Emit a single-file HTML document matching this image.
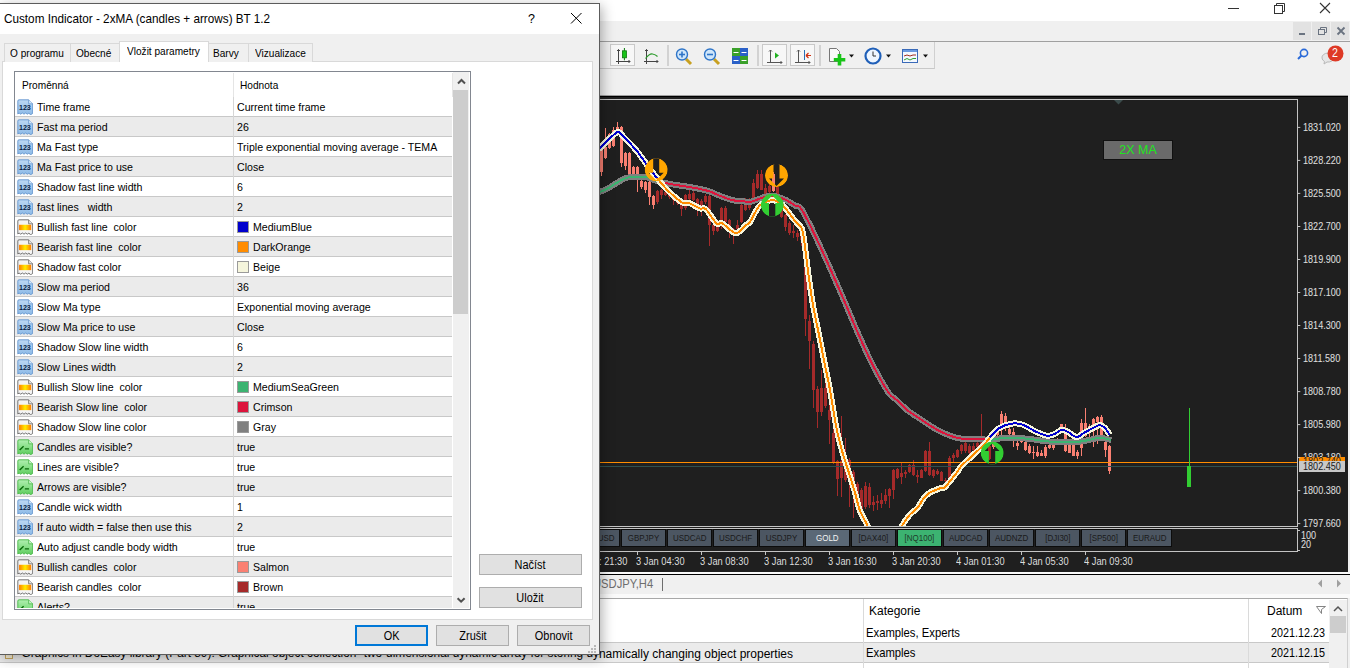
<!DOCTYPE html><html><head><meta charset="utf-8"><style>
*{margin:0;padding:0;box-sizing:border-box}
html,body{width:1350px;height:668px;overflow:hidden;background:#f0f0f0;font-family:"Liberation Sans",sans-serif}
body{position:relative}
.a{position:absolute}
.t{position:absolute;white-space:pre;line-height:1}
.px{position:absolute;white-space:pre;line-height:1;font-size:10.1px;color:#e0e0e0;left:1303.3px;transform:scaleX(0.9);transform-origin:0 0}
.tm{position:absolute;white-space:pre;line-height:1;font-size:10.6px;color:#dcdcdc;top:555.7px;transform:scaleX(0.877);transform-origin:0 0}
.sym{position:absolute;top:529px;height:18px;background:#4c5662;border:1px solid #0c0c0c;font-size:9.4px;color:#1a1a1a;text-align:center;line-height:15.6px;white-space:pre}.sym span{display:inline-block;transform:scaleX(0.85)}
.tab{position:absolute;top:40px;height:21px;background:#f0f0f0;border:1px solid #d9d9d9;border-bottom:none;font-size:10.1px;color:#000;white-space:pre}
.row{position:absolute;left:1px;width:438px;height:20px;font-size:10.6px;color:#000;white-space:pre}
.row .n{position:absolute;left:22px;top:4.8px;line-height:1;font-size:11.8px;transform:scaleX(0.898);transform-origin:0 0}
.row .v{position:absolute;left:222px;top:4.8px;line-height:1;font-size:11.8px;transform:scaleX(0.898);transform-origin:0 0}
.row .ic{position:absolute;left:1.6px;top:1.8px;width:16.5px;height:16.5px}
.row .sw{position:absolute;left:222px;top:4px;width:12px;height:12px;border:1px solid #9a9a9a}
.row .vs{position:absolute;left:238px;top:4.8px;line-height:1;font-size:11.8px;transform:scaleX(0.898);transform-origin:0 0}
.btn{position:absolute;background:#e1e1e1;border:1px solid #adadad;font-size:10.6px;color:#000;text-align:center;white-space:pre}
</style></head><body>
<div class="a" style="left:0;top:0;width:1350px;height:21px;background:#fff"></div>
<svg class="a" style="left:1220px;top:0" width="130" height="21"><line x1="8" y1="8.5" x2="19" y2="8.5" stroke="#333" stroke-width="1"/><rect x="54.5" y="5.5" width="8" height="8" fill="none" stroke="#333"/><path d="M56.5 5.5V3.5h8v8h-2" fill="none" stroke="#333"/><path d="M100 3l10 10M110 3l-10 10" stroke="#333" stroke-width="1.1"/></svg>
<div class="a" style="left:1293px;top:22px;width:18px;height:18px;background:#e2e2e2"></div>
<div class="a" style="left:1312px;top:22px;width:18px;height:18px;background:#e2e2e2"></div>
<div class="a" style="left:1331px;top:22px;width:18px;height:18px;background:#e2e2e2"></div>
<svg class="a" style="left:1293px;top:22px" width="57" height="18"><rect x="6" y="11" width="6" height="2" fill="#6a7380"/><rect x="25.5" y="7.5" width="6" height="5" fill="none" stroke="#6a7380"/><path d="M27.5 7.5V5.5h6v5h-2" fill="none" stroke="#6a7380"/><path d="M44.5 5.5l7 7M51.5 5.5l-7 7" stroke="#6a7380" stroke-width="1.8"/></svg>
<div class="a" style="left:0;top:41px;width:1350px;height:1px;background:#a0a0a0"></div>
<div class="a" style="left:0;top:42px;width:935px;height:27px;border-bottom:1px solid #c8c8c8;border-right:1px solid #d0d0d0"></div>
<div class="a" style="left:0;top:95px;width:1348px;height:1px;background:#a0a0a0"></div>
<div class="a" style="left:0;top:96px;width:1348px;height:1px;background:#000"></div>
<div class="a" style="left:0;top:97px;width:1348px;height:475px;background:#1f1f1f"></div>
<div class="a" style="left:0;top:572px;width:1350px;height:2px;background:#fafafa"></div>
<div class="a" style="left:0;top:574px;width:1350px;height:1px;background:#000"></div>
<div class="px" style="top:122.5px">1831.020</div>
<div class="px" style="top:155.5px">1828.220</div>
<div class="px" style="top:188.5px">1825.500</div>
<div class="px" style="top:221.6px">1822.700</div>
<div class="px" style="top:254.6px">1819.900</div>
<div class="px" style="top:287.6px">1817.100</div>
<div class="px" style="top:320.6px">1814.300</div>
<div class="px" style="top:353.6px">1811.580</div>
<div class="px" style="top:386.7px">1808.780</div>
<div class="px" style="top:419.7px">1805.980</div>
<div class="px" style="top:452.7px">1803.180</div>
<div class="px" style="top:485.7px">1800.380</div>
<div class="px" style="top:518.7px">1797.660</div>
<div class="a" style="left:1299px;top:457px;width:46px;height:5px;background:#ff8c00;overflow:hidden"><div class="t" style="left:4px;top:0px;font-size:10.4px;color:#222;transform:scaleX(0.875);transform-origin:0 0">1802.740</div></div>
<div class="a" style="left:1299px;top:461px;width:46px;height:11px;background:#c8c8c8"></div>
<div class="t" style="left:1303.3px;top:462.1px;font-size:10.1px;color:#1a1a1a;transform:scaleX(0.9);transform-origin:0 0">1802.450</div>
<div class="px" style="top:531px;left:1301px">100</div>
<div class="px" style="top:540.3px;left:1301px">20</div>
<div class="tm" style="left:598.7px">: 21:30</div>
<div class="tm" style="left:636.0px">3 Jan 04:30</div>
<div class="tm" style="left:700.0px">3 Jan 08:30</div>
<div class="tm" style="left:764.0px">3 Jan 12:30</div>
<div class="tm" style="left:828.0px">3 Jan 16:30</div>
<div class="tm" style="left:892.0px">3 Jan 20:30</div>
<div class="tm" style="left:956.0px">4 Jan 01:30</div>
<div class="tm" style="left:1020.0px">4 Jan 05:30</div>
<div class="tm" style="left:1084.0px">4 Jan 09:30</div>
<div class="sym" style="left:575px;width:45px;"><span>AUDUSD</span></div>
<div class="sym" style="left:621px;width:45px;"><span>GBPJPY</span></div>
<div class="sym" style="left:667px;width:45px;"><span>USDCAD</span></div>
<div class="sym" style="left:713px;width:45px;"><span>USDCHF</span></div>
<div class="sym" style="left:759px;width:45px;"><span>USDJPY</span></div>
<div class="sym" style="left:805px;width:45px;background:#5a6876;color:#f4f4f4;"><span>GOLD</span></div>
<div class="sym" style="left:851px;width:45px;"><span>[DAX40]</span></div>
<div class="sym" style="left:897px;width:45px;background:#3cb371;color:#1e3a2a;"><span>[NQ100]</span></div>
<div class="sym" style="left:943px;width:45px;"><span>AUDCAD</span></div>
<div class="sym" style="left:989px;width:45px;"><span>AUDNZD</span></div>
<div class="sym" style="left:1035px;width:45px;"><span>[DJI30]</span></div>
<div class="sym" style="left:1081px;width:45px;"><span>[SP500]</span></div>
<div class="sym" style="left:1127px;width:45px;"><span>EURAUD</span></div>
<div class="a" style="left:1103px;top:140px;width:70px;height:20px;background:#6a6a6a;border:1px solid #111;color:#1ee61e;font-size:12.5px;text-align:center;line-height:18px">2X MA</div>
<svg class="a" style="left:0;top:0" width="1350" height="668"><defs><clipPath id="plot"><rect x="0" y="100" width="1297" height="426"/></clipPath><clipPath id="acirc"><circle cx="0" cy="0" r="11.5"/></clipPath></defs><rect x="-5" y="99.5" width="1302.5" height="427" fill="none" stroke="#c4c4c4" stroke-width="1"/><rect x="-5" y="528.5" width="1302.5" height="23" fill="none" stroke="#c4c4c4" stroke-width="1"/><path d="M1114 100h9l-4.5 4.5z" fill="#3b4b4b"/><line x1="1297.5" y1="127.4" x2="1300.3" y2="127.4" stroke="#c4c4c4"/><line x1="1297.5" y1="160.4" x2="1300.3" y2="160.4" stroke="#c4c4c4"/><line x1="1297.5" y1="193.4" x2="1300.3" y2="193.4" stroke="#c4c4c4"/><line x1="1297.5" y1="226.5" x2="1300.3" y2="226.5" stroke="#c4c4c4"/><line x1="1297.5" y1="259.5" x2="1300.3" y2="259.5" stroke="#c4c4c4"/><line x1="1297.5" y1="292.5" x2="1300.3" y2="292.5" stroke="#c4c4c4"/><line x1="1297.5" y1="325.5" x2="1300.3" y2="325.5" stroke="#c4c4c4"/><line x1="1297.5" y1="358.5" x2="1300.3" y2="358.5" stroke="#c4c4c4"/><line x1="1297.5" y1="391.6" x2="1300.3" y2="391.6" stroke="#c4c4c4"/><line x1="1297.5" y1="424.6" x2="1300.3" y2="424.6" stroke="#c4c4c4"/><line x1="1297.5" y1="457.6" x2="1300.3" y2="457.6" stroke="#c4c4c4"/><line x1="1297.5" y1="490.6" x2="1300.3" y2="490.6" stroke="#c4c4c4"/><line x1="1297.5" y1="523.6" x2="1300.3" y2="523.6" stroke="#c4c4c4"/><path d="M1297.5 530.5h2.5M1297.5 550.5h2.5" stroke="#c4c4c4"/><line x1="573.5" y1="551.5" x2="573.5" y2="555" stroke="#c4c4c4"/><line x1="637.5" y1="551.5" x2="637.5" y2="555" stroke="#c4c4c4"/><line x1="701.5" y1="551.5" x2="701.5" y2="555" stroke="#c4c4c4"/><line x1="765.5" y1="551.5" x2="765.5" y2="555" stroke="#c4c4c4"/><line x1="829.5" y1="551.5" x2="829.5" y2="555" stroke="#c4c4c4"/><line x1="893.5" y1="551.5" x2="893.5" y2="555" stroke="#c4c4c4"/><line x1="957.5" y1="551.5" x2="957.5" y2="555" stroke="#c4c4c4"/><line x1="1021.5" y1="551.5" x2="1021.5" y2="555" stroke="#c4c4c4"/><line x1="1085.5" y1="551.5" x2="1085.5" y2="555" stroke="#c4c4c4"/><path d="M600 149h3v23h-3zM601 147h1v29h-1zM604 147h3v11h-3zM605 128h1v31h-1zM608 134h3v14h-3zM609 133h1v16h-1zM612 130h3v16h-3zM613 127h1v20h-1zM616 127h3v3h-3zM617 122h1v9h-1zM620 127h3v36h-3zM621 126h1v41h-1zM624 153h3v13h-3zM625 152h1v18h-1zM628 153h3v22h-3zM629 152h1v24h-1zM632 167h3v8h-3zM633 166h1v10h-1zM636 167h3v8h-3zM637 166h1v26h-1zM640 181h3v6h-3zM641 180h1v9h-1zM644 182h3v8h-3zM645 181h1v12h-1zM648 182h3v15h-3zM649 181h1v24h-1zM652 196h3v9h-3zM653 195h1v14h-1zM772 174h3v17h-3zM773 172h1v20h-1zM992 444h3v3h-3zM993 442h1v7h-1zM996 428h3v7h-3zM997 426h1v10h-1zM1000 414h3v10h-3zM1001 411h1v25h-1zM1004 416h3v6h-3zM1005 413h1v18h-1zM1008 429h3v5h-3zM1009 427h1v9h-1zM1012 432h3v3h-3zM1013 428h1v19h-1zM1016 443h3v3h-3zM1017 441h1v9h-1zM1020 441h3v1h-3zM1021 439h1v4h-1zM1024 442h3v8h-3zM1025 441h1v10h-1zM1028 446h3v7h-3zM1029 444h1v10h-1zM1032 452h3v1h-3zM1033 446h1v13h-1zM1036 452h3v4h-3zM1037 446h1v11h-1zM1040 453h3v3h-3zM1041 450h1v6h-1zM1044 447h3v9h-3zM1045 445h1v13h-1zM1048 445h3v3h-3zM1049 444h1v5h-1zM1052 444h3v4h-3zM1053 443h1v7h-1zM1056 440h3v3h-3zM1057 438h1v7h-1zM1060 424h3v7h-3zM1061 424h1v8h-1zM1064 428h3v23h-3zM1065 424h1v28h-1zM1068 444h3v9h-3zM1069 442h1v11h-1zM1072 444h3v12h-3zM1073 443h1v13h-1zM1076 452h3v4h-3zM1077 450h1v9h-1zM1080 423h3v25h-3zM1081 419h1v37h-1zM1084 423h3v13h-3zM1085 408h1v29h-1zM1088 426h3v4h-3zM1089 424h1v14h-1zM1092 419h3v12h-3zM1093 418h1v29h-1zM1096 417h3v5h-3zM1097 416h1v28h-1zM1100 417h3v19h-3zM1101 415h1v22h-1zM1104 442h3v8h-3zM1105 441h1v16h-1zM1108 446h3v25h-3zM1109 445h1v29h-1z" fill="#fa8072" clip-path="url(#plot)"/><path d="M656 191h3v11h-3zM657 190h1v14h-1zM660 190h3v5h-3zM661 189h1v10h-1zM664 192h3v3h-3zM665 191h1v5h-1zM668 193h3v4h-3zM669 192h1v7h-1zM672 198h3v2h-3zM673 196h1v9h-1zM676 200h3v3h-3zM677 198h1v7h-1zM680 205h3v4h-3zM681 204h1v12h-1zM684 195h3v13h-3zM685 194h1v16h-1zM688 194h3v5h-3zM689 190h1v10h-1zM692 193h3v7h-3zM693 190h1v11h-1zM696 199h3v6h-3zM697 198h1v18h-1zM700 201h3v5h-3zM701 199h1v17h-1zM704 196h3v6h-3zM705 194h1v10h-1zM708 196h3v29h-3zM709 195h1v51h-1zM712 225h3v6h-3zM713 224h1v11h-1zM716 226h3v5h-3zM717 225h1v7h-1zM720 208h3v17h-3zM721 207h1v22h-1zM724 208h3v14h-3zM725 206h1v17h-1zM728 220h3v8h-3zM729 219h1v19h-1zM732 229h3v2h-3zM733 228h1v16h-1zM736 225h3v4h-3zM737 220h1v10h-1zM740 205h3v17h-3zM741 201h1v22h-1zM744 205h3v5h-3zM745 198h1v13h-1zM748 204h3v4h-3zM749 198h1v12h-1zM752 183h3v15h-3zM753 179h1v20h-1zM756 174h3v14h-3zM757 170h1v19h-1zM760 174h3v16h-3zM761 170h1v20h-1zM764 188h3v6h-3zM765 184h1v11h-1zM768 186h3v6h-3zM769 184h1v9h-1zM776 187h3v8h-3zM777 186h1v10h-1zM780 210h3v7h-3zM781 208h1v10h-1zM784 215h3v12h-3zM785 214h1v17h-1zM788 223h3v10h-3zM789 221h1v14h-1zM792 231h3v2h-3zM793 225h1v13h-1zM796 233h3v4h-3zM797 230h1v11h-1zM800 236h3v4h-3zM801 232h1v14h-1zM804 262h3v57h-3zM805 240h1v96h-1zM808 321h3v20h-3zM809 315h1v54h-1zM812 344h3v46h-3zM813 341h1v67h-1zM816 389h3v23h-3zM817 386h1v42h-1zM820 388h3v24h-3zM821 370h1v46h-1zM824 388h3v18h-3zM825 370h1v38h-1zM828 410h3v10h-3zM829 399h1v45h-1zM832 433h3v29h-3zM833 417h1v47h-1zM836 461h3v18h-3zM837 460h1v36h-1zM840 461h3v17h-3zM841 416h1v81h-1zM844 458h3v22h-3zM845 438h1v44h-1zM848 460h3v9h-3zM849 458h1v49h-1zM852 472h3v10h-3zM853 470h1v48h-1zM856 484h3v15h-3zM857 482h1v18h-1zM860 490h3v19h-3zM861 488h1v23h-1zM864 486h3v21h-3zM865 482h1v27h-1zM868 487h3v18h-3zM869 483h1v25h-1zM872 502h3v3h-3zM873 496h1v15h-1zM876 501h3v2h-3zM877 495h1v15h-1zM880 500h3v4h-3zM881 493h1v15h-1zM884 495h3v6h-3zM885 489h1v15h-1zM888 489h3v7h-3zM889 488h1v20h-1zM892 470h3v20h-3zM893 469h1v30h-1zM896 469h3v9h-3zM897 468h1v11h-1zM900 473h3v4h-3zM901 463h1v21h-1zM904 472h3v2h-3zM905 470h1v8h-1zM908 465h3v7h-3zM909 464h1v9h-1zM912 465h3v10h-3zM913 460h1v16h-1zM916 475h3v2h-3zM917 470h1v13h-1zM920 470h3v8h-3zM921 469h1v9h-1zM924 451h3v20h-3zM925 450h1v22h-1zM928 451h3v24h-3zM929 442h1v34h-1zM932 470h3v6h-3zM933 469h1v9h-1zM936 471h3v3h-3zM937 469h1v6h-1zM940 472h3v9h-3zM941 471h1v10h-1zM944 480h3v1h-3zM945 478h1v5h-1zM948 458h3v22h-3zM949 456h1v25h-1zM952 455h3v3h-3zM953 453h1v10h-1zM956 450h3v7h-3zM957 449h1v9h-1zM960 445h3v6h-3zM961 444h1v10h-1zM964 443h3v8h-3zM965 442h1v11h-1zM968 446h3v7h-3zM969 444h1v10h-1zM972 446h3v4h-3zM973 443h1v8h-1zM976 443h3v4h-3zM977 442h1v6h-1zM980 440h3v7h-3zM981 414h1v34h-1zM984 444h3v3h-3zM985 442h1v6h-1zM988 446h3v13h-3zM989 444h1v16h-1z" fill="#a52a2a" clip-path="url(#plot)"/><rect x="0" y="462" width="1297" height="1" fill="#ff8c00"/><rect x="0" y="466" width="1297" height="1" fill="#2f4f4f"/><rect x="1189" y="408" width="1" height="58" fill="#32cd32"/><rect x="1187" y="466" width="4" height="21" fill="#32cd32"/><g clip-path="url(#plot)" fill="none" stroke-linejoin="round" stroke-linecap="butt" shape-rendering="crispEdges"><path d="M599.0 192.2 C600.4 191.6 603.0 191.0 607.6 188.6 C612.2 186.2 620.3 179.7 626.7 177.8 C633.1 175.9 640.8 176.5 646.0 177.1 C651.2 177.7 653.5 180.3 658.0 181.5 C662.5 182.7 667.3 183.5 673.0 184.5 C678.7 185.5 686.4 186.4 692.4 187.5 C698.4 188.6 704.6 189.9 708.9 191.2 C713.1 192.4 713.9 193.5 717.9 195.0 C721.9 196.5 727.9 199.1 732.9 200.2 C737.9 201.3 744.6 201.5 747.8 201.7 C751.0 201.9 748.3 202.5 752.0 201.5 C755.7 200.5 764.7 196.1 770.0 195.7 C775.3 195.3 779.4 197.3 783.7 199.0 C788.0 200.7 793.1 204.4 796.0 206.0 C798.9 207.6 798.4 204.7 801.0 208.5 C803.6 212.3 807.3 219.6 811.9 229.0 C816.5 238.4 823.3 253.2 828.6 265.0 C833.9 276.8 839.1 289.0 843.9 300.0 C848.6 311.0 852.5 320.7 857.1 331.1 C861.7 341.5 866.2 352.1 871.4 362.3 C876.6 372.5 884.0 385.9 888.2 392.2 C892.4 398.5 893.4 397.0 896.6 400.0 C899.8 403.0 903.4 407.0 907.4 410.2 C911.4 413.4 915.4 415.8 920.6 419.2 C925.8 422.6 932.1 427.3 938.5 430.5 C944.9 433.7 952.0 436.9 958.9 438.3 C965.8 439.7 974.8 438.5 980.0 438.8 C985.2 439.1 985.9 440.2 990.0 440.1 C994.1 440.0 998.7 438.1 1004.9 437.9 C1011.1 437.7 1019.9 438.1 1027.4 438.7 C1034.9 439.3 1041.1 441.1 1049.8 441.6 C1058.5 442.1 1071.6 442.2 1079.8 441.6 C1088.0 441.0 1094.0 438.1 1099.2 437.9 C1104.4 437.6 1109.2 439.7 1111.2 440.1" stroke="#808080" stroke-width="6"/><path d="M599.0 192.2 C600.4 191.6 603.0 191.0 607.6 188.6 C612.2 186.2 620.3 179.7 626.7 177.8 C633.1 175.9 641.0 176.5 646.0 177.1 C651.0 177.7 655.2 180.5 657.0 181.1" stroke="#3cb371" stroke-width="2"/><path d="M657.0 181.1 C657.2 181.2 655.3 180.9 658.0 181.5 C660.7 182.1 667.3 183.5 673.0 184.5 C678.7 185.5 686.4 186.4 692.4 187.5 C698.4 188.6 704.6 189.9 708.9 191.2 C713.1 192.4 713.9 193.5 717.9 195.0 C721.9 196.5 727.9 199.1 732.9 200.2 C737.9 201.3 744.6 201.5 747.8 201.7 C751.0 201.9 748.3 202.5 752.0 201.5 C755.7 200.5 764.7 196.1 770.0 195.7 C775.3 195.3 779.4 197.3 783.7 199.0 C788.0 200.7 793.1 204.4 796.0 206.0 C798.9 207.6 798.4 204.7 801.0 208.5 C803.6 212.3 807.3 219.6 811.9 229.0 C816.5 238.4 823.3 253.2 828.6 265.0 C833.9 276.8 839.1 289.0 843.9 300.0 C848.6 311.0 852.5 320.7 857.1 331.1 C861.7 341.5 866.2 352.1 871.4 362.3 C876.6 372.5 884.0 385.9 888.2 392.2 C892.4 398.5 893.4 397.0 896.6 400.0 C899.8 403.0 903.4 407.0 907.4 410.2 C911.4 413.4 915.4 415.8 920.6 419.2 C925.8 422.6 932.1 427.3 938.5 430.5 C944.9 433.7 952.0 436.9 958.9 438.3 C965.8 439.7 974.8 438.5 980.0 438.8 C985.2 439.1 988.3 439.9 990.0 440.1" stroke="#dc143c" stroke-width="2"/><path d="M990.0 440.1 C990.0 440.1 987.5 440.5 990.0 440.1 C992.5 439.7 998.7 438.1 1004.9 437.9 C1011.1 437.7 1019.9 438.1 1027.4 438.7 C1034.9 439.3 1041.1 441.1 1049.8 441.6 C1058.5 442.1 1071.6 442.2 1079.8 441.6 C1088.0 441.0 1094.0 438.1 1099.2 437.9 C1104.4 437.6 1109.2 439.7 1111.2 440.1" stroke="#3cb371" stroke-width="2"/><path d="M599.0 149.0 C601.4 146.8 613.7 133.9 617.0 132.3 C620.3 130.7 620.9 134.4 623.5 136.8 C626.1 139.2 633.3 146.7 636.3 150.3 C639.3 153.9 643.3 159.8 646.0 163.5 C648.7 167.2 653.8 174.2 656.7 177.8 C659.6 181.4 664.3 187.1 667.7 190.4 C671.1 193.7 679.1 200.7 682.0 202.4 C684.9 204.1 687.0 202.4 689.4 203.2 C691.8 204.0 697.7 207.6 699.9 208.4 C702.1 209.2 703.7 207.2 705.9 209.2 C708.1 211.2 714.2 221.5 716.4 223.4 C718.6 225.3 719.8 222.1 722.4 223.4 C725.0 224.7 732.6 233.2 735.8 233.4 C739.0 233.6 744.4 226.4 746.3 224.9 C748.2 223.4 748.3 224.5 750.0 222.0 C751.7 219.5 756.7 208.7 759.4 205.8 C762.1 202.9 768.0 201.1 770.2 200.4 C772.4 199.7 774.4 200.3 776.0 200.8 C777.6 201.3 779.9 202.0 782.3 204.5 C784.7 207.0 791.3 216.3 793.9 219.5 C796.5 222.7 800.3 225.4 801.7 228.5 C803.1 231.6 803.6 236.3 804.5 242.8 C805.4 249.3 807.7 268.7 808.8 277.0 C809.9 285.3 811.7 297.7 813.0 305.3 C814.3 312.9 817.3 326.2 818.8 333.8 C820.3 341.4 822.9 354.6 824.4 362.2 C825.9 369.8 828.5 381.7 830.1 390.6 C831.7 399.5 835.0 420.9 836.7 429.2 C838.4 437.5 840.8 446.5 842.5 452.5 C844.2 458.5 847.6 468.5 849.3 474.0 C851.0 479.5 853.8 488.5 855.2 493.4 C856.6 498.3 858.4 506.9 860.0 511.0 C861.6 515.1 864.9 520.0 866.9 524.5 C868.9 529.0 872.7 541.3 875.0 545.0 C877.3 548.7 881.6 552.0 884.0 552.0 C886.4 552.0 890.6 548.5 893.0 545.0 C895.4 541.5 899.8 530.0 902.0 526.0 C904.2 522.0 907.5 517.3 909.6 514.9 C911.7 512.5 915.8 510.0 917.7 507.7 C919.6 505.4 922.3 499.8 924.0 497.8 C925.7 495.8 928.0 493.7 930.3 492.4 C932.6 491.1 939.1 488.7 941.0 488.0 C942.9 487.3 943.2 488.7 944.6 487.5 C946.0 486.3 950.0 481.2 951.8 479.0 C953.6 476.8 956.6 472.7 958.0 470.9 C959.4 469.1 959.7 467.6 962.0 465.3 C964.3 463.0 972.0 456.1 975.0 453.3 C978.0 450.5 982.5 446.3 984.6 444.1 C986.7 441.9 988.9 438.6 990.8 436.5 C992.7 434.4 996.1 429.9 998.9 428.2 C1001.7 426.5 1008.4 424.2 1011.6 423.7 C1014.8 423.2 1019.8 423.7 1022.9 424.7 C1026.0 425.7 1031.7 429.7 1034.9 431.2 C1038.1 432.7 1044.2 435.3 1046.8 435.7 C1049.4 436.1 1052.3 435.0 1054.3 434.2 C1056.3 433.4 1060.0 430.0 1061.8 429.7 C1063.6 429.4 1065.8 430.9 1067.8 431.9 C1069.8 432.9 1074.6 437.1 1076.8 437.2 C1079.0 437.3 1081.3 434.3 1084.3 432.7 C1087.3 431.1 1096.4 425.8 1099.2 425.2 C1102.0 424.6 1103.8 426.9 1105.2 428.2 C1106.6 429.5 1109.1 434.0 1109.7 434.9" stroke="#f5f5dc" stroke-width="6"/><path d="M599.0 149.0 C601.4 146.8 613.7 133.9 617.0 132.3 C620.3 130.7 620.9 134.4 623.5 136.8 C626.1 139.2 633.3 146.7 636.3 150.3 C639.3 153.9 643.3 159.8 646.0 163.5 C648.7 167.2 655.2 175.8 656.7 177.8 C658.2 179.8 657.0 178.1 657.0 178.1" stroke="#0000cd" stroke-width="2"/><path d="M657.0 178.1 C658.4 179.8 664.4 187.2 667.7 190.4 C671.0 193.6 679.1 200.7 682.0 202.4 C684.9 204.1 687.0 202.4 689.4 203.2 C691.8 204.0 697.7 207.6 699.9 208.4 C702.1 209.2 703.7 207.2 705.9 209.2 C708.1 211.2 714.2 221.5 716.4 223.4 C718.6 225.3 719.8 222.1 722.4 223.4 C725.0 224.7 732.6 233.2 735.8 233.4 C739.0 233.6 744.4 226.4 746.3 224.9 C748.2 223.4 748.3 224.5 750.0 222.0 C751.7 219.5 756.7 208.7 759.4 205.8 C762.1 202.9 768.0 201.1 770.2 200.4 C772.4 199.7 774.4 200.3 776.0 200.8 C777.6 201.3 779.9 202.0 782.3 204.5 C784.7 207.0 791.3 216.3 793.9 219.5 C796.5 222.7 800.3 225.4 801.7 228.5 C803.1 231.6 803.6 236.3 804.5 242.8 C805.4 249.3 807.7 268.7 808.8 277.0 C809.9 285.3 811.7 297.7 813.0 305.3 C814.3 312.9 817.3 326.2 818.8 333.8 C820.3 341.4 822.9 354.6 824.4 362.2 C825.9 369.8 828.5 381.7 830.1 390.6 C831.7 399.5 835.0 420.9 836.7 429.2 C838.4 437.5 840.8 446.5 842.5 452.5 C844.2 458.5 847.6 468.5 849.3 474.0 C851.0 479.5 853.8 488.5 855.2 493.4 C856.6 498.3 858.4 506.9 860.0 511.0 C861.6 515.1 864.9 520.0 866.9 524.5 C868.9 529.0 872.7 541.3 875.0 545.0 C877.3 548.7 881.6 552.0 884.0 552.0 C886.4 552.0 890.6 548.5 893.0 545.0 C895.4 541.5 899.8 530.0 902.0 526.0 C904.2 522.0 907.5 517.3 909.6 514.9 C911.7 512.5 915.8 510.0 917.7 507.7 C919.6 505.4 922.3 499.8 924.0 497.8 C925.7 495.8 928.0 493.7 930.3 492.4 C932.6 491.1 939.1 488.7 941.0 488.0 C942.9 487.3 943.2 488.7 944.6 487.5 C946.0 486.3 950.0 481.2 951.8 479.0 C953.6 476.8 956.6 472.7 958.0 470.9 C959.4 469.1 959.7 467.6 962.0 465.3 C964.3 463.0 972.0 456.1 975.0 453.3 C978.0 450.5 982.6 446.2 984.6 444.1 C986.6 442.0 989.3 438.4 990.0 437.5" stroke="#ff8c00" stroke-width="2"/><path d="M990.0 437.5 C990.1 437.3 989.6 437.7 990.8 436.5 C992.0 435.3 996.1 429.9 998.9 428.2 C1001.7 426.5 1008.4 424.2 1011.6 423.7 C1014.8 423.2 1019.8 423.7 1022.9 424.7 C1026.0 425.7 1031.7 429.7 1034.9 431.2 C1038.1 432.7 1044.2 435.3 1046.8 435.7 C1049.4 436.1 1052.3 435.0 1054.3 434.2 C1056.3 433.4 1060.0 430.0 1061.8 429.7 C1063.6 429.4 1065.8 430.9 1067.8 431.9 C1069.8 432.9 1074.6 437.1 1076.8 437.2 C1079.0 437.3 1081.3 434.3 1084.3 432.7 C1087.3 431.1 1096.4 425.8 1099.2 425.2 C1102.0 424.6 1103.8 426.9 1105.2 428.2 C1106.6 429.5 1109.1 434.0 1109.7 434.9" stroke="#0000cd" stroke-width="2"/></g><g transform="translate(656.2,169.8)"><path clip-path="url(#acirc)" fill-rule="evenodd" fill="#ffa500" d="M-11.5 0a11.5 11.5 0 1 0 23 0a11.5 11.5 0 1 0 -23 0zM-3 -13h6v16h4.5l-7.5 7.5l-7.5 -7.5h4.5z"/></g><g transform="translate(776.5,175.4)"><path clip-path="url(#acirc)" fill-rule="evenodd" fill="#ffa500" d="M-11.5 0a11.5 11.5 0 1 0 23 0a11.5 11.5 0 1 0 -23 0zM-3 -13h6v16h4.5l-7.5 7.5l-7.5 -7.5h4.5z"/></g><g transform="translate(772.3,205.1)"><path clip-path="url(#acirc)" fill-rule="evenodd" fill="#32cd32" d="M-11.5 0a11.5 11.5 0 1 0 23 0a11.5 11.5 0 1 0 -23 0zM-3.3 13h6.3v-15h4.3l-7.4 -7.5l-7.4 7.5h4.2z"/></g><g transform="translate(992.2,452.9)"><path clip-path="url(#acirc)" fill-rule="evenodd" fill="#32cd32" d="M-11.5 0a11.5 11.5 0 1 0 23 0a11.5 11.5 0 1 0 -23 0zM-3.3 13h6.3v-15h4.3l-7.4 -7.5l-7.4 7.5h4.2z"/></g></svg>
<svg class="a" style="left:0;top:0" width="1350" height="96"><rect x="610.5" y="44.5" width="24" height="21" fill="#f7f7f7" stroke="#c9c9c9"/><rect x="762.5" y="44.5" width="24" height="21" fill="#f7f7f7" stroke="#c9c9c9"/><rect x="790.5" y="44.5" width="24" height="21" fill="#f7f7f7" stroke="#c9c9c9"/><rect x="667.5" y="45" width="1" height="21" fill="#b4b4b4"/><rect x="757.5" y="45" width="1" height="21" fill="#b4b4b4"/><rect x="819.5" y="45" width="1" height="21" fill="#b4b4b4"/><path d="M618.5 49.5v14.5M617 51l1.5-1.5 1.5 1.5M616 61.5h14M628.5 60l1.5 1.5-1.5 1.5" stroke="#444" fill="none"/><rect x="622.4" y="50.8" width="4" height="7" fill="#18c418" stroke="#0a7a0a" stroke-width="0.8"/><path d="M624.4 48v2.8M624.4 57.8v2.5" stroke="#0a7a0a"/><path d="M646.5 49.5v14.5M645 51l1.5-1.5 1.5 1.5M644 61.5h14M656.5 60l1.5 1.5-1.5 1.5" stroke="#444" fill="none"/><path d="M645.5 58.5q4-5 7-4.5t5 2.5" stroke="#2a9a2a" stroke-width="1.2" fill="none"/><path d="M686 59l5 5" stroke="#c8a020" stroke-width="3"/><circle cx="682" cy="54.5" r="5.5" fill="#cfe6fa" stroke="#2f75c8" stroke-width="1.4"/><path d="M679 54.5h6" stroke="#2f75c8" stroke-width="1.6"/><path d="M682 51.5v6" stroke="#2f75c8" stroke-width="1.6"/><path d="M714 59l5 5" stroke="#c8a020" stroke-width="3"/><circle cx="710" cy="54.5" r="5.5" fill="#cfe6fa" stroke="#2f75c8" stroke-width="1.4"/><path d="M707 54.5h6" stroke="#2f75c8" stroke-width="1.6"/><rect x="732" y="48" width="8" height="8" fill="#3aa02a"/><rect x="740" y="48" width="8" height="8" fill="#2a60c8"/><rect x="732" y="56" width="8" height="8" fill="#2a60c8"/><rect x="740" y="56" width="8" height="8" fill="#3aa02a"/><path d="M733.5 52.5h5M741.5 52.5h5M733.5 60.5h5M741.5 60.5h5" stroke="#fff"/><path d="M770.5 50v13M769 51.5l1.5-1.5 1.5 1.5M767 62.5h15M780.5 61l1.5 1.5-1.5 1.5" stroke="#555" fill="none"/><path d="M775 52.5v6l4-3z" fill="#20b020"/><path d="M798.5 50v13M797 51.5l1.5-1.5 1.5 1.5M795 62.5h15M808.5 61l1.5 1.5-1.5 1.5" stroke="#555" fill="none"/><path d="M804.5 50v10" stroke="#2a70b8"/><path d="M806 55.5h5M806 55.5l2.5-2.5M806 55.5l2.5 2.5" stroke="#d03010" stroke-width="1.2"/><path d="M829.5 48.5h7l3 3v10h-10z" fill="#fafafa" stroke="#777"/><path d="M839.5 54v11.5M833.8 59.8h11.5" stroke="#18c418" stroke-width="3.6"/><path d="M849 54.5h5l-2.5 3z" fill="#111"/><circle cx="873" cy="56" r="7.5" fill="#eef6ff" stroke="#1f5fb8" stroke-width="2.2"/><path d="M873 51.5v4.5h3" stroke="#333" fill="none"/><path d="M886 54.5h5l-2.5 3z" fill="#111"/><rect x="902.5" y="49.5" width="15" height="13" fill="#f4f8ff" stroke="#3a6ab8"/><rect x="903" y="50" width="14" height="2" fill="#6a9ae0"/><path d="M904 56l3-1 3 1 3-1 3 0" stroke="#a03020" fill="none"/><path d="M904 60l3-1.5 3 1.5 3-1.5 3 0" stroke="#30a030" fill="none"/><path d="M923 54.5h5l-2.5 3z" fill="#111"/><circle cx="1304" cy="53" r="3.6" fill="none" stroke="#2a6ad8" stroke-width="1.6"/><path d="M1301.5 55.5l-3.5 3.5" stroke="#2a6ad8" stroke-width="2"/><path d="M1322 58a6 4.5 0 1 1 5 4l-3 2 0.5-2.5a6 4.5 0 0 1-2.5-3.5z" fill="#e6e6e6" stroke="#b8b8b8"/><circle cx="1335.5" cy="53.5" r="8" fill="#de3a26"/></svg>
<div class="t" style="left:1331.5px;top:46.8px;font-size:12.5px;color:#fff;transform:scaleX(0.85);transform-origin:0 0">2</div>
<div class="a" style="left:0;top:575px;width:1350px;height:19px;background:#f0f0f0"></div>
<div class="t" style="left:592.9px;top:577.6px;font-size:12.3px;color:#6e6e6e;transform:scaleX(0.91);transform-origin:0 0">USDJPY,H4</div>
<div class="a" style="left:662px;top:578px;width:1px;height:13px;background:#6e6e6e"></div>
<svg class="a" style="left:1310px;top:577px" width="40" height="14"><path d="M12 2.5v8l-4-4z" fill="#a0a0a0"/><path d="M27 2.5v8l4-4z" fill="#a0a0a0"/></svg>
<div class="a" style="left:0;top:594px;width:1350px;height:4px;background:#fafafa"></div>
<div class="a" style="left:0;top:598px;width:1348px;height:70px;background:#fff;border-top:1px solid #a8a8a8;border-right:1px solid #d0d0d0"></div>
<div class="a" style="left:0;top:642px;width:1329px;height:21px;background:#ebebeb;border-top:1px solid #c8c8c8;border-bottom:1px solid #c8c8c8"></div>
<div class="a" style="left:863px;top:599px;width:1px;height:69px;background:#dadada"></div>
<div class="a" style="left:1248px;top:599px;width:1px;height:69px;background:#dadada"></div>
<div class="t" style="left:869px;top:605.3px;font-size:12px;color:#000">Kategorie</div>
<div class="t" style="left:1267px;top:605.3px;font-size:12px;color:#000">Datum</div>
<svg class="a" style="left:1310px;top:600px" width="40" height="68"><path d="M6.5 6.5h9l-4 3v4z" fill="none" stroke="#777" stroke-width="0.9"/><rect x="19" y="0" width="18" height="68" fill="#f0f0f0"/><path d="M24 11l4-4 4 4" fill="none" stroke="#555" stroke-width="1.5"/><rect x="20" y="16" width="16" height="17" fill="#cdcdcd"/></svg>
<div class="t" style="left:866.3px;top:627.2px;font-size:12.2px;color:#000;transform:scaleX(0.925);transform-origin:0 0">Examples, Experts</div>
<div class="t" style="left:866.3px;top:647.3px;font-size:12.2px;color:#000;transform:scaleX(0.925);transform-origin:0 0">Examples</div>
<div class="t" style="left:1270.5px;top:627.2px;font-size:12.2px;color:#000;transform:scaleX(0.885);transform-origin:0 0">2021.12.23</div>
<div class="t" style="left:1270.5px;top:647.3px;font-size:12.2px;color:#000;transform:scaleX(0.885);transform-origin:0 0">2021.12.15</div>
<div class="t" style="left:21.6px;top:648.2px;font-size:11.86px;color:#000">Graphics in DoEasy library (Part 89): Graphical object collection- two-dimensional dynamic array for storing dy</div>
<div class="t" style="left:598.9px;top:648.2px;font-size:12px;color:#000">namically changing object properties</div>
<div class="a" style="left:5px;top:652px;width:8px;height:7px;border:1px solid #c8a860;background:#f8f0d8"></div>
<div class="a" style="left:-1px;top:3px;width:601px;height:652px;background:#f0f0f0;border:1px solid #5c5c5c;box-shadow:2px 3px 12px rgba(0,0,0,0.32)"></div>
<div class="a" style="left:0;top:4px;width:599px;height:30px;background:#fff"></div>
<div class="t" style="left:4px;top:11.5px;font-size:13px;color:#000;transform:scaleX(0.9025);transform-origin:0 0">Custom Indicator - 2xMA (candles + arrows) BT 1.2</div>
<div class="t" style="left:527.6px;top:11.6px;font-size:13.6px;color:#000;transform:scaleX(0.92);transform-origin:0 0">?</div>
<svg class="a" style="left:566px;top:8px" width="20" height="20"><path d="M5 5l10.5 10.5M15.5 5l-10.5 10.5" stroke="#000" stroke-width="1"/></svg>
<div class="a" style="left:2px;top:61px;width:591px;height:559px;background:#fff;border:1px solid #d9d9d9"></div>
<div class="tab" style="left:4px;top:43px;width:67px;height:19px"></div>
<div class="t" style="left:9.7px;top:48.1px;font-size:11.4px;color:#000;transform:scaleX(0.886);transform-origin:0 0">O programu</div>
<div class="tab" style="left:70px;top:43px;width:51px;height:19px"></div>
<div class="t" style="left:76.4px;top:48.1px;font-size:11.4px;color:#000;transform:scaleX(0.886);transform-origin:0 0">Obecné</div>
<div class="tab" style="left:208px;top:43px;width:42px;height:19px"></div>
<div class="t" style="left:213.4px;top:48.1px;font-size:11.4px;color:#000;transform:scaleX(0.886);transform-origin:0 0">Barvy</div>
<div class="tab" style="left:248px;top:43px;width:65px;height:19px"></div>
<div class="t" style="left:255px;top:48.1px;font-size:11.4px;color:#000;transform:scaleX(0.886);transform-origin:0 0">Vizualizace</div>
<div class="a" style="left:119px;top:41px;width:90px;height:21px;background:#fff;border:1px solid #d9d9d9;border-bottom:none"></div>
<div class="t" style="left:127px;top:45.6px;font-size:11.4px;color:#000;transform:scaleX(0.886);transform-origin:0 0">Vložit parametry</div>
<div class="a" style="left:14px;top:71px;width:457px;height:539px;background:#fff;border:1px solid #828790;overflow:hidden">
<div class="a" style="left:218px;top:1px;width:1px;height:24px;background:#e5e5e5"></div>
<div class="a" style="left:437px;top:1px;width:1px;height:24px;background:#e5e5e5"></div>
<div class="t" style="left:7.3px;top:8.3px;font-size:11.5px;color:#000;transform:scaleX(0.88);transform-origin:0 0">Proměnná</div>
<div class="t" style="left:225.2px;top:8.3px;font-size:11.5px;color:#000;transform:scaleX(0.88);transform-origin:0 0">Hodnota</div>
<div class="row" style="top:25px;left:0;width:437px;background:#fff">
<svg class="ic" viewBox="0 0 16 16"><use href="#i123"/></svg>
<span class="n">Time frame</span>
<span class="v">Current time frame</span>
</div>
<div class="a" style="left:0;top:44px;width:437px;height:1px;background:#c8c8c8"></div>
<div class="row" style="top:45px;left:0;width:437px;background:#ebebeb">
<svg class="ic" viewBox="0 0 16 16"><use href="#i123"/></svg>
<span class="n">Fast ma period</span>
<span class="v">26</span>
</div>
<div class="a" style="left:0;top:64px;width:437px;height:1px;background:#c8c8c8"></div>
<div class="row" style="top:65px;left:0;width:437px;background:#fff">
<svg class="ic" viewBox="0 0 16 16"><use href="#i123"/></svg>
<span class="n">Ma Fast type</span>
<span class="v">Triple exponential moving average - TEMA</span>
</div>
<div class="a" style="left:0;top:84px;width:437px;height:1px;background:#c8c8c8"></div>
<div class="row" style="top:85px;left:0;width:437px;background:#ebebeb">
<svg class="ic" viewBox="0 0 16 16"><use href="#i123"/></svg>
<span class="n">Ma Fast price to use</span>
<span class="v">Close</span>
</div>
<div class="a" style="left:0;top:104px;width:437px;height:1px;background:#c8c8c8"></div>
<div class="row" style="top:105px;left:0;width:437px;background:#fff">
<svg class="ic" viewBox="0 0 16 16"><use href="#i123"/></svg>
<span class="n">Shadow fast line width</span>
<span class="v">6</span>
</div>
<div class="a" style="left:0;top:124px;width:437px;height:1px;background:#c8c8c8"></div>
<div class="row" style="top:125px;left:0;width:437px;background:#ebebeb">
<svg class="ic" viewBox="0 0 16 16"><use href="#i123"/></svg>
<span class="n">fast lines   width</span>
<span class="v">2</span>
</div>
<div class="a" style="left:0;top:144px;width:437px;height:1px;background:#c8c8c8"></div>
<div class="row" style="top:145px;left:0;width:437px;background:#fff">
<svg class="ic" viewBox="0 0 16 16"><use href="#icol"/></svg>
<span class="n">Bullish fast line  color</span>
<span class="sw" style="background:#0000cd"></span><span class="vs">MediumBlue</span>
</div>
<div class="a" style="left:0;top:164px;width:437px;height:1px;background:#c8c8c8"></div>
<div class="row" style="top:165px;left:0;width:437px;background:#ebebeb">
<svg class="ic" viewBox="0 0 16 16"><use href="#icol"/></svg>
<span class="n">Bearish fast line  color</span>
<span class="sw" style="background:#ff8c00"></span><span class="vs">DarkOrange</span>
</div>
<div class="a" style="left:0;top:184px;width:437px;height:1px;background:#c8c8c8"></div>
<div class="row" style="top:185px;left:0;width:437px;background:#fff">
<svg class="ic" viewBox="0 0 16 16"><use href="#icol"/></svg>
<span class="n">Shadow fast color</span>
<span class="sw" style="background:#f5f5dc"></span><span class="vs">Beige</span>
</div>
<div class="a" style="left:0;top:204px;width:437px;height:1px;background:#c8c8c8"></div>
<div class="row" style="top:205px;left:0;width:437px;background:#ebebeb">
<svg class="ic" viewBox="0 0 16 16"><use href="#i123"/></svg>
<span class="n">Slow ma period</span>
<span class="v">36</span>
</div>
<div class="a" style="left:0;top:224px;width:437px;height:1px;background:#c8c8c8"></div>
<div class="row" style="top:225px;left:0;width:437px;background:#fff">
<svg class="ic" viewBox="0 0 16 16"><use href="#i123"/></svg>
<span class="n">Slow Ma type</span>
<span class="v">Exponential moving average</span>
</div>
<div class="a" style="left:0;top:244px;width:437px;height:1px;background:#c8c8c8"></div>
<div class="row" style="top:245px;left:0;width:437px;background:#ebebeb">
<svg class="ic" viewBox="0 0 16 16"><use href="#i123"/></svg>
<span class="n">Slow Ma price to use</span>
<span class="v">Close</span>
</div>
<div class="a" style="left:0;top:264px;width:437px;height:1px;background:#c8c8c8"></div>
<div class="row" style="top:265px;left:0;width:437px;background:#fff">
<svg class="ic" viewBox="0 0 16 16"><use href="#i123"/></svg>
<span class="n">Shadow Slow line width</span>
<span class="v">6</span>
</div>
<div class="a" style="left:0;top:284px;width:437px;height:1px;background:#c8c8c8"></div>
<div class="row" style="top:285px;left:0;width:437px;background:#ebebeb">
<svg class="ic" viewBox="0 0 16 16"><use href="#i123"/></svg>
<span class="n">Slow Lines width</span>
<span class="v">2</span>
</div>
<div class="a" style="left:0;top:304px;width:437px;height:1px;background:#c8c8c8"></div>
<div class="row" style="top:305px;left:0;width:437px;background:#fff">
<svg class="ic" viewBox="0 0 16 16"><use href="#icol"/></svg>
<span class="n">Bullish Slow line  color</span>
<span class="sw" style="background:#3cb371"></span><span class="vs">MediumSeaGreen</span>
</div>
<div class="a" style="left:0;top:324px;width:437px;height:1px;background:#c8c8c8"></div>
<div class="row" style="top:325px;left:0;width:437px;background:#ebebeb">
<svg class="ic" viewBox="0 0 16 16"><use href="#icol"/></svg>
<span class="n">Bearish Slow line  color</span>
<span class="sw" style="background:#dc143c"></span><span class="vs">Crimson</span>
</div>
<div class="a" style="left:0;top:344px;width:437px;height:1px;background:#c8c8c8"></div>
<div class="row" style="top:345px;left:0;width:437px;background:#fff">
<svg class="ic" viewBox="0 0 16 16"><use href="#icol"/></svg>
<span class="n">Shadow Slow line color</span>
<span class="sw" style="background:#808080"></span><span class="vs">Gray</span>
</div>
<div class="a" style="left:0;top:364px;width:437px;height:1px;background:#c8c8c8"></div>
<div class="row" style="top:365px;left:0;width:437px;background:#ebebeb">
<svg class="ic" viewBox="0 0 16 16"><use href="#ibool"/></svg>
<span class="n">Candles are visible?</span>
<span class="v">true</span>
</div>
<div class="a" style="left:0;top:384px;width:437px;height:1px;background:#c8c8c8"></div>
<div class="row" style="top:385px;left:0;width:437px;background:#fff">
<svg class="ic" viewBox="0 0 16 16"><use href="#ibool"/></svg>
<span class="n">Lines are visible?</span>
<span class="v">true</span>
</div>
<div class="a" style="left:0;top:404px;width:437px;height:1px;background:#c8c8c8"></div>
<div class="row" style="top:405px;left:0;width:437px;background:#ebebeb">
<svg class="ic" viewBox="0 0 16 16"><use href="#ibool"/></svg>
<span class="n">Arrows are visible?</span>
<span class="v">true</span>
</div>
<div class="a" style="left:0;top:424px;width:437px;height:1px;background:#c8c8c8"></div>
<div class="row" style="top:425px;left:0;width:437px;background:#fff">
<svg class="ic" viewBox="0 0 16 16"><use href="#i123"/></svg>
<span class="n">Candle wick width</span>
<span class="v">1</span>
</div>
<div class="a" style="left:0;top:444px;width:437px;height:1px;background:#c8c8c8"></div>
<div class="row" style="top:445px;left:0;width:437px;background:#ebebeb">
<svg class="ic" viewBox="0 0 16 16"><use href="#i123"/></svg>
<span class="n">If auto width = false then use this</span>
<span class="v">2</span>
</div>
<div class="a" style="left:0;top:464px;width:437px;height:1px;background:#c8c8c8"></div>
<div class="row" style="top:465px;left:0;width:437px;background:#fff">
<svg class="ic" viewBox="0 0 16 16"><use href="#ibool"/></svg>
<span class="n">Auto adjust candle body width</span>
<span class="v">true</span>
</div>
<div class="a" style="left:0;top:484px;width:437px;height:1px;background:#c8c8c8"></div>
<div class="row" style="top:485px;left:0;width:437px;background:#ebebeb">
<svg class="ic" viewBox="0 0 16 16"><use href="#icol"/></svg>
<span class="n">Bullish candles  color</span>
<span class="sw" style="background:#fa8072"></span><span class="vs">Salmon</span>
</div>
<div class="a" style="left:0;top:504px;width:437px;height:1px;background:#c8c8c8"></div>
<div class="row" style="top:505px;left:0;width:437px;background:#fff">
<svg class="ic" viewBox="0 0 16 16"><use href="#icol"/></svg>
<span class="n">Bearish candles  color</span>
<span class="sw" style="background:#a52a2a"></span><span class="vs">Brown</span>
</div>
<div class="a" style="left:0;top:524px;width:437px;height:1px;background:#c8c8c8"></div>
<div class="row" style="top:525px;left:0;width:437px;background:#ebebeb">
<svg class="ic" viewBox="0 0 16 16"><use href="#ibool"/></svg>
<span class="n">Alerts?</span>
<span class="v">true</span>
</div>
<div class="a" style="left:0;top:544px;width:437px;height:1px;background:#c8c8c8"></div>
<div class="a" style="left:0;top:536px;width:437px;height:2px;background:#fff"></div>
<div class="a" style="left:218px;top:25px;width:1px;height:511px;background:#d6d6d6"></div>
<div class="a" style="left:438px;top:0;width:16px;height:536px;background:#f0f0f0"></div>
<div class="a" style="left:438px;top:18px;width:15px;height:224px;background:#cdcdcd"></div>
<svg class="a" style="left:438px;top:0" width="17" height="537"><path d="M5 11.5l3.5-3.5 3.5 3.5" fill="none" stroke="#505050" stroke-width="2"/><path d="M4.6 526.2l3.5 3.5 3.5-3.5" fill="none" stroke="#505050" stroke-width="2"/></svg>
</div>
<div class="btn" style="left:479px;top:554px;width:103px;height:21px;"></div>
<div class="t" style="left:479px;top:559px;width:103px;text-align:center;font-size:12px;color:#000"><span style="display:inline-block;transform:scaleX(0.91)">Načíst</span></div>
<div class="btn" style="left:479px;top:587px;width:103px;height:21px;"></div>
<div class="t" style="left:479px;top:592px;width:103px;text-align:center;font-size:12px;color:#000"><span style="display:inline-block;transform:scaleX(0.91)">Uložit</span></div>
<div class="btn" style="left:355px;top:625px;width:73px;height:21px;border:2px solid #0078d7;"></div>
<div class="t" style="left:355px;top:630px;width:73px;text-align:center;font-size:12px;color:#000"><span style="display:inline-block;transform:scaleX(0.91)">OK</span></div>
<div class="btn" style="left:436px;top:625px;width:73px;height:21px;"></div>
<div class="t" style="left:436px;top:630px;width:73px;text-align:center;font-size:12px;color:#000"><span style="display:inline-block;transform:scaleX(0.91)">Zrušit</span></div>
<div class="btn" style="left:517px;top:625px;width:73px;height:21px;"></div>
<div class="t" style="left:517px;top:630px;width:73px;text-align:center;font-size:12px;color:#000"><span style="display:inline-block;transform:scaleX(0.91)">Obnovit</span></div>
<svg class="a" style="left:586px;top:642px" width="12" height="12"><rect x="8" y="3" width="2" height="2" fill="#b8b8b8"/><rect x="5" y="6" width="2" height="2" fill="#b8b8b8"/><rect x="8" y="6" width="2" height="2" fill="#b8b8b8"/><rect x="2" y="9" width="2" height="2" fill="#b8b8b8"/><rect x="5" y="9" width="2" height="2" fill="#b8b8b8"/><rect x="8" y="9" width="2" height="2" fill="#b8b8b8"/></svg>
<svg width="0" height="0" style="position:absolute"><defs>
<linearGradient id="gb" x1="0" y1="0" x2="0" y2="1"><stop offset="0" stop-color="#bcd8f4"/><stop offset="1" stop-color="#8cb9e6"/></linearGradient>
<linearGradient id="gg" x1="0" y1="0" x2="0" y2="1"><stop offset="0" stop-color="#b0f0b0"/><stop offset="1" stop-color="#5ccc5c"/></linearGradient>
<linearGradient id="go" x1="0" y1="0" x2="1" y2="0"><stop offset="0" stop-color="#ff7a00"/><stop offset="0.5" stop-color="#ffee00"/><stop offset="1" stop-color="#ff7a00"/></linearGradient>
<path id="pg" d="M0.8 2Q0.8 0.8 2 0.8H11.3L15.2 4.7V14L14.3 14.6 13.2 15.5 11.6 13.6 10 14.7 8.4 13.6 6.8 14.7 5.2 13.6 3.6 14.7 2 13.6 0.8 14.5Z"/>
<symbol id="i123" viewBox="0 0 16 16"><use href="#pg" fill="url(#gb)" stroke="#6797cf" stroke-width="0.9"/><path d="M11.3 0.8v3.9h3.9" fill="#d6e8fa" stroke="#6797cf" stroke-width="0.8"/><text x="7.3" y="10.4" font-size="6.6" font-weight="bold" text-anchor="middle" fill="#0a1f44" font-family="Liberation Sans" transform="scale(1.05 1)">123</text></symbol>
<symbol id="icol" viewBox="0 0 16 16"><use href="#pg" fill="#f4f4f4" stroke="#6a6a6a" stroke-width="0.9"/><path d="M11.3 0.8v3.9h3.9" fill="#e4e4e4" stroke="#6a6a6a" stroke-width="0.8"/><rect x="2" y="5.6" width="11.8" height="5.2" fill="url(#go)"/></symbol>
<symbol id="ibool" viewBox="0 0 16 16"><use href="#pg" fill="url(#gg)" stroke="#4cb84c" stroke-width="0.9"/><path d="M11.3 0.8v3.9h3.9" fill="#c8f4c8" stroke="#4cb84c" stroke-width="0.8"/><path d="M2.6 10.6l3.8-3.6M7.6 9.6h4" stroke="#0a6a0a" stroke-width="1.4"/></symbol>
</defs></svg>
</body></html>
